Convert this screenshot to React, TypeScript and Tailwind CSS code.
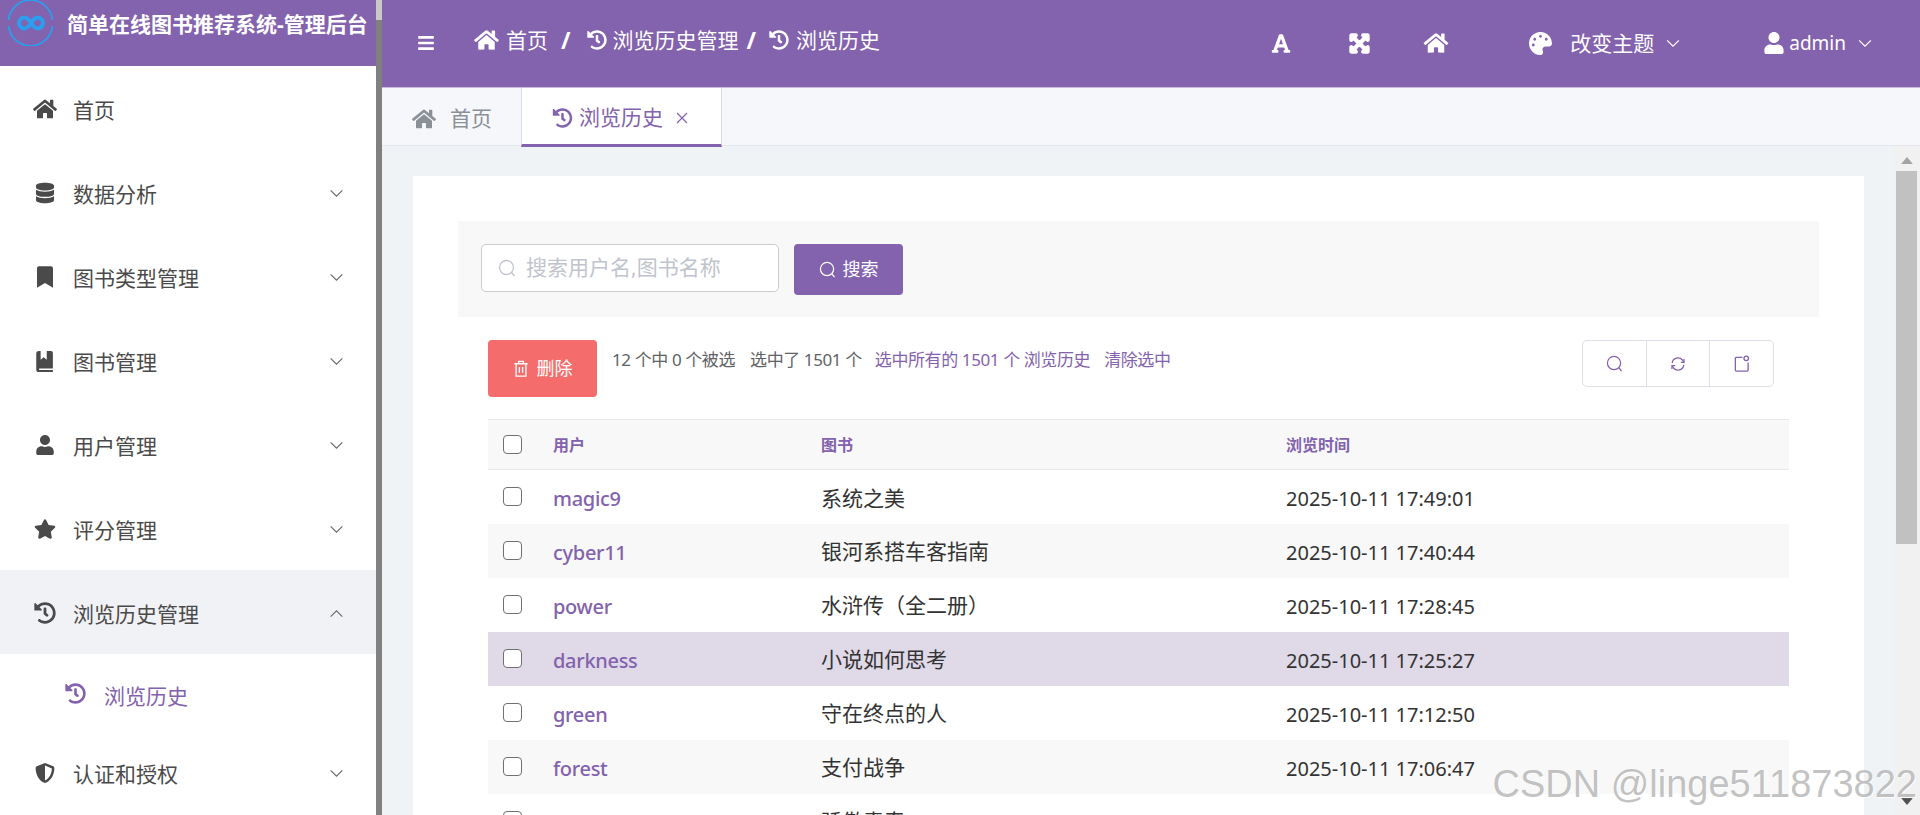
import React from "react";
import {
  FaHome, FaDatabase, FaBookmark, FaUser, FaStar, FaHistory, FaShieldAlt, FaBars, FaFont,
  FaExpandArrowsAlt, FaPalette,
} from "react-icons/fa";

const Chevron = ({ up = false, className = "" }: { up?: boolean; className?: string }) => (
  <svg viewBox="0 0 16 10" className={className} fill="none" stroke="currentColor" strokeWidth="1.3">
    <path d={up ? "M1.5 8.5L8 2l6.5 6.5" : "M1.5 1.5L8 8l6.5-6.5"} />
  </svg>
);

const BookIcon = ({ className = "" }: { className?: string }) => (
  <svg viewBox="0 0 20 24" className={className} fill="currentColor">
    <path d="M3 0h2v10l3.5-3L12 10V0h5a2 2 0 0 1 2 2v17a1 1 0 0 1-1 1H3.5a1.5 1.5 0 0 0 0 1.8H19V24H3a3 3 0 0 1-3-3V3a3 3 0 0 1 3-3z" />
  </svg>
);

const Search = ({ className = "" }: { className?: string }) => (
  <svg viewBox="0 0 18 18" className={className} fill="none" stroke="currentColor" strokeWidth="1.3">
    <circle cx="8.5" cy="8.5" r="7" />
    <path d="M13.5 13.5L16.5 17" />
  </svg>
);

const Refresh = ({ className = "" }: { className?: string }) => (
  <svg viewBox="0 0 18 18" className={className} fill="none" stroke="currentColor" strokeWidth="1.4">
    <path d="M2.5 8A6.5 6.5 0 0 1 14 4.5l1.5 2.5M15.5 10A6.5 6.5 0 0 1 4 13.5L2.5 11" />
    <path d="M15.8 3.5V7.2H12.2M2.2 14.5V10.8H5.8" />
  </svg>
);

const Notice = ({ className = "" }: { className?: string }) => (
  <svg viewBox="0 0 18 18" className={className} fill="none" stroke="currentColor" strokeWidth="1.4">
    <path d="M10 2.5H3.5a1 1 0 0 0-1 1V16a1 1 0 0 0 1 1H15a1 1 0 0 0 1-1V8" />
    <circle cx="14" cy="3.5" r="2.4" />
  </svg>
);

const Trash = ({ className = "" }: { className?: string }) => (
  <svg viewBox="0 0 16 18" className={className} fill="none" stroke="currentColor" strokeWidth="1.4">
    <path d="M1 4h14M5.500 4V1.500h5V4M2.800 4v13h10.400V4M6.300 7.500v6M9.700 7.500v6" />
  </svg>
);

const Logo = () => (
  <svg viewBox="0 0 61 46" className="h-[46px] w-[61px] shrink-0" fill="none" stroke="#2a9ff0">
    <path d="M8.600 20A22 22 0 0 1 52.400 20" strokeWidth="1.800" />
    <path d="M8.600 26A22 22 0 0 0 52.400 26" strokeWidth="1.800" />
    <path
      d="M31 23c-2-3-4-5.500-6.500-5.500a5.500 5.500 0 0 0 0 11c2.500 0 4.500-2.500 6.500-5.500s4-5.500 6.500-5.500a5.500 5.500 0 0 1 0 11c-2.500 0-4.500-2.500-6.500-5.500z"
      strokeWidth="4"
    />
  </svg>
);

const menu = [
  { label: "首页", icon: <FaHome className="h-[22px] w-[24px]" /> },
  { label: "数据分析", icon: <FaDatabase className="h-[24px] w-[18px]" />, arrow: true },
  { label: "图书类型管理", icon: <FaBookmark className="h-[24px] w-[16px]" />, arrow: true },
  { label: "图书管理", icon: <BookIcon className="h-[21px] w-[18px]" />, arrow: true },
  { label: "用户管理", icon: <FaUser className="h-[20px] w-[18px]" />, arrow: true },
  { label: "评分管理", icon: <FaStar className="h-[20px] w-[22px]" />, arrow: true },
];

const rows = [
  ["magic9", "系统之美", "2025-10-11 17:49:01"],
  ["cyber11", "银河系搭车客指南", "2025-10-11 17:40:44"],
  ["power", "水浒传（全二册）", "2025-10-11 17:28:45"],
  ["darkness", "小说如何思考", "2025-10-11 17:25:27"],
  ["green", "守在终点的人", "2025-10-11 17:12:50"],
  ["forest", "支付战争", "2025-10-11 17:06:47"],
  ["winter", "骄傲青春", "2025-10-11 17:00:54"],
];

const Check = () => (
  <span className="block h-[19px] w-[19px] rounded-[4px] border border-[#707070] bg-white" />
);

const MenuRow = ({
  label, icon, arrow, up, active,
}: { label: string; icon: React.ReactNode; arrow?: boolean; up?: boolean; active?: boolean }) => (
  <div className={`flex h-[84px] items-center pl-[30px] pr-[32px] pt-[2px] text-[21px] ${active ? "bg-[#f1f2f6]" : ""}`}>
    <span className="flex w-[30px] justify-center">{icon}</span>
    <span className="ml-[13px] flex-1 pt-[4px]">{label}</span>
    {arrow && <Chevron up={up} className="h-[9px] w-[15px] text-[#6b6b6b]" />}
  </div>
);

export default function App() {
  return (
    <div className="relative flex h-[815px] w-[1920px] overflow-hidden bg-white font-['Noto_Sans','Noto_Sans_CJK_SC',sans-serif] text-[#333]">
      {/* sidebar */}
      <aside className="flex w-[376px] flex-col text-[#4a4a4a]">
        <div className="flex h-[66px] items-start bg-[#8362ae] text-white">
          <Logo />
          <span className="ml-[6px] mt-[6px] whitespace-nowrap text-[21px] font-bold leading-[36px]">
            简单在线图书推荐系统-管理后台
          </span>
        </div>
        {menu.map((m) => (
          <MenuRow key={m.label} label={m.label} icon={m.icon} arrow={m.arrow} />
        ))}
        <MenuRow label="浏览历史管理" icon={<FaHistory className="h-[22px] w-[22px]" />} arrow up active />
        <div className="flex h-[76px] items-start pl-[65px] pt-[24px] text-[21px] text-[#8362ae]">
          <FaHistory className="mt-[5px] h-[21px] w-[21px]" />
          <span className="ml-[18px] leading-[36px]">浏览历史</span>
        </div>
        <MenuRow label="认证和授权" icon={<FaShieldAlt className="h-[22px] w-[20px]" />} arrow />
      </aside>

      {/* sidebar scrollbar */}
      <div className="flex w-[6px] flex-col bg-[#808080]">
        <div className="h-[20px] bg-[#c9c9c9]" />
      </div>

      {/* main */}
      <main className="flex min-w-0 flex-1 flex-col bg-[#f0f3f6]">
        <header className="flex h-[88px] shrink-0 items-start border-b border-[#c9bcdc] bg-[#8362ae] pl-[34px] text-white">
          <FaBars className="mt-[34px] h-[18px] w-[20px]" />
          <div className="ml-[37px] mt-[22px] flex items-center text-[21px] leading-[36px]">
            <FaHome className="h-[22px] w-[27px]" />
            <span className="ml-[6px]">首页</span>
            <span className="ml-[13px] text-[23px] font-bold">/</span>
            <FaHistory className="ml-[16px] h-[20px] w-[20px]" />
            <span className="ml-[6px]">浏览历史管理</span>
            <span className="ml-[8px] text-[23px] font-bold">/</span>
            <FaHistory className="ml-[13px] h-[20px] w-[20px]" />
            <span className="ml-[7px]">浏览历史</span>
          </div>
          <div className="ml-auto mt-[25px] flex items-center text-[21px] leading-[36px]">
            <FaFont className="h-[21px] w-[20px]" />
            <FaExpandArrowsAlt className="ml-[58px] h-[21px] w-[21px]" stroke="currentColor" strokeWidth={50} />
            <FaHome className="ml-[53px] h-[22px] w-[26px]" />
            <FaPalette className="ml-[80px] h-[23px] w-[23px]" />
            <span className="ml-[18px]">改变主题</span>
            <Chevron className="ml-[11px] h-[9px] w-[16px]" />
            <FaUser className="ml-[83px] h-[22px] w-[20px]" />
            <span className="ml-[5px] text-[19px]">admin</span>
            <Chevron className="ml-[11px] mr-[47px] h-[9px] w-[16px]" />
          </div>
        </header>

        <nav className="flex h-[58px] shrink-0 items-stretch border-b border-[#e4e7ed] bg-[#f5f7fb] text-[21px]">
          <div className="flex w-[139px] items-center pl-[30px] pt-[4px] text-[#8b8f96]">
            <FaHome className="h-[22px] w-[24px]" />
            <span className="ml-[14px]">首页</span>
          </div>
          <div className="relative flex h-[59px] w-[201px] items-center border-x border-b-[3px] border-x-[#d9dce6] border-b-[#8362ae] bg-white pl-[30px] pt-[4px] text-[#8362ae]">
            <FaHistory className="h-[20px] w-[21px]" />
            <span className="ml-[6px]">浏览历史</span>
            <svg viewBox="0 0 12 12" className="ml-[13px] h-[12px] w-[12px]" fill="none" stroke="currentColor" strokeWidth="1.2">
              <path d="M1 1l10 10M11 1L1 11" />
            </svg>
          </div>
        </nav>

        <div className="flex min-h-0 flex-1">
          <div className="min-w-0 flex-1 overflow-hidden pl-[31px] pr-[29px] pt-[30px]">
            <section className="bg-white px-[45px] pb-[40px] pt-[45px]">
              <div className="flex h-[96px] items-start gap-[15px] bg-[#f8f8f8] pl-[23px] pt-[23px]">
                <div className="flex h-[48px] w-[298px] items-center rounded-[5px] border border-[#cccccc] bg-white pl-[16px] text-[21px] text-[#c0c4cc]">
                  <Search className="h-[18px] w-[18px]" />
                  <span className="ml-[10px]">搜索用户名,图书名称</span>
                </div>
                <div className="flex h-[51px] w-[109px] items-center justify-center rounded-[4px] bg-[#8362ae] text-[18px] text-white">
                  <Search className="h-[17px] w-[17px]" />
                  <span className="ml-[7px]">搜索</span>
                </div>
              </div>

              <div className="mt-[23px] flex items-start pl-[30px] pr-[45px]">
                <div className="flex h-[57px] w-[109px] items-center justify-center rounded-[4px] bg-[#f56c6c] text-[18px] text-white">
                  <Trash className="h-[17px] w-[16px]" />
                  <span className="ml-[8px]">删除</span>
                </div>
                <div className="ml-[15px] mt-[7px] flex whitespace-nowrap text-[17px] leading-[26px] tracking-[-0.4px] text-[#606266]">
                  <span>12 个中 0 个被选</span>
                  <span className="ml-[15px]">选中了 1501 个</span>
                  <span className="ml-[13px] text-[#8362ae]">选中所有的 1501 个 浏览历史</span>
                  <span className="ml-[14px] text-[#8362ae]">清除选中</span>
                </div>
                <div className="ml-auto flex h-[47px] w-[192px] divide-x divide-[#dcdfe6] rounded-[5px] border border-[#dcdfe6] text-[#8362ae]">
                  <span className="flex flex-1 items-center justify-center"><Search className="h-[17px] w-[17px]" /></span>
                  <span className="flex flex-1 items-center justify-center"><Refresh className="h-[16px] w-[16px]" /></span>
                  <span className="flex flex-1 items-center justify-center"><Notice className="h-[17px] w-[17px]" /></span>
                </div>
              </div>

              <div className="ml-[30px] mr-[30px] mt-[22px]">
                <table className="w-full table-fixed border-collapse">
                  <thead>
                    <tr className="h-[50px] border-y border-[#e9e9e9] bg-[#f8f8f8] text-left text-[16px] font-bold text-[#8362ae]">
                      <th className="w-[65px] pl-[15px] align-middle"><Check /></th>
                      <th className="w-[268px] font-bold">用户</th>
                      <th className="w-[465px] font-bold">图书</th>
                      <th className="font-bold">浏览时间</th>
                    </tr>
                  </thead>
                  <tbody>
                    {rows.map((r, i) => (
                      <tr key={r[0]} className={`h-[54px] text-[21px] ${i === 3 ? "bg-[#e0d9e8]" : i % 2 === 1 ? "bg-[#f8f8f8]" : "bg-white"}`}>
                        <td className="pl-[15px] align-middle"><Check /></td>
                        <td className="pt-[4px] text-[20px] font-medium tracking-[-0.3px] text-[#8362ae]">{r[0]}</td>
                        <td className="pt-[3px] text-[#333]">{r[1]}</td>
                        <td className="pt-[4px] text-[20px] text-[#333]">{r[2]}</td>
                      </tr>
                    ))}
                  </tbody>
                </table>
              </div>
            </section>
          </div>

          {/* page scrollbar */}
          <div className="flex w-[27px] shrink-0 flex-col items-stretch bg-[#f1f1f1] pr-[3px] pl-[3px]">
            <svg viewBox="0 0 10 6" className="mx-auto mt-[11px] h-[7px] w-[12px] fill-[#a3a3a3]"><path d="M5 0l5 6H0z" /></svg>
            <div className="mt-[7px] h-[373px] bg-[#c1c1c1]" />
            <svg viewBox="0 0 10 6" className="mx-auto mt-auto mb-[10px] h-[7px] w-[12px] fill-[#505050]"><path d="M0 0h10L5 6z" /></svg>
          </div>
        </div>
      </main>

      {/* watermark */}
      <div className="pointer-events-none absolute bottom-[9px] right-[3px] whitespace-nowrap font-['Liberation_Sans',sans-serif] text-[38px] leading-[44px] text-[#9a9a9a]/60 [text-shadow:1px_1px_1px_rgba(255,255,255,0.8)]">
        CSDN @linge511873822
      </div>
    </div>
  );
}
